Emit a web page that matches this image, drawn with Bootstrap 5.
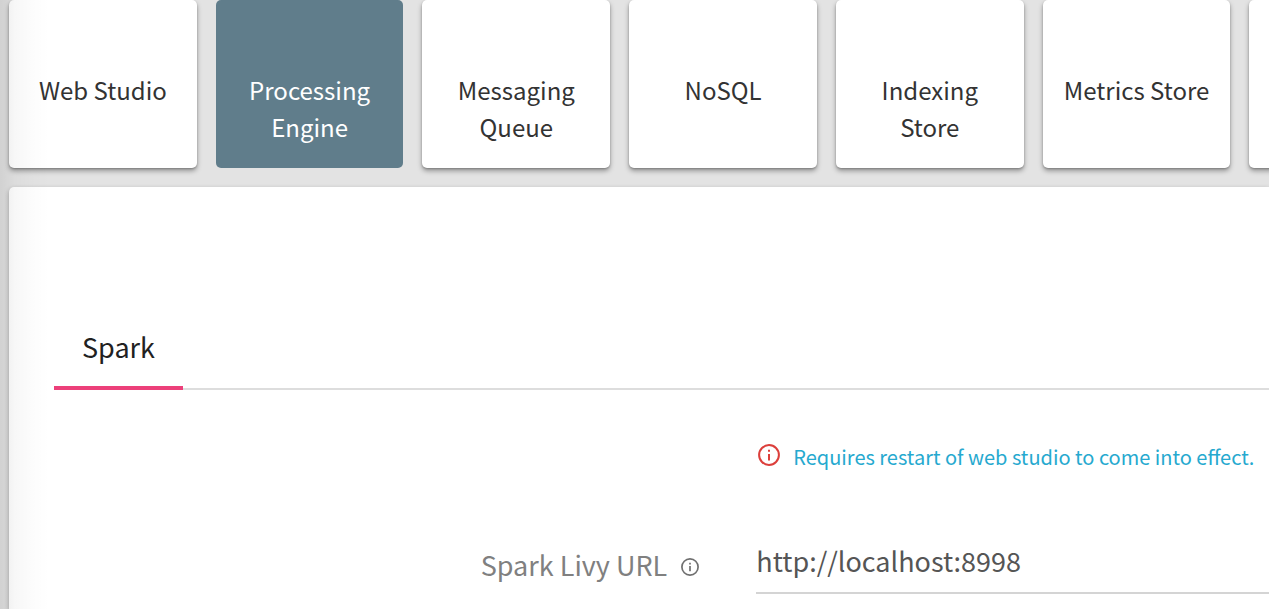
<!DOCTYPE html>
<html lang="en">
<head>
<meta charset="utf-8">
<meta name="viewport" content="width=device-width, initial-scale=1">
<title>Processing Engine - Spark</title>
<link href="https://cdn.jsdelivr.net/npm/bootstrap@5.3.0/dist/css/bootstrap.min.css" rel="stylesheet">
<style>
  body { font-family: "Noto Sans CJK SC", sans-serif; background: #e3e3e3; color: #333; overflow-x: hidden; }
  /* soft shade along the left edge of the page */
  .shell::before { content: ""; position: absolute; inset: 0 auto 0 0; width: 50px; z-index: 5; pointer-events: none;
    background: linear-gradient(to right, rgba(0,0,0,.08), rgba(0,0,0,.03) 30%, rgba(0,0,0,.01) 65%, transparent); }
  .shell { padding-left: 9px; overflow: hidden; }
  .tiles { gap: 19px; }
  .tile { flex: 0 0 14.9%; min-height: 168px; padding: 71px 16px 22px; border: 0; border-radius: 5px; background: #fff; color: #333;
    font-size: 24px; line-height: 37px; box-shadow: 0 3px 5px rgba(0,0,0,.35), 0 1px 2px rgba(0,0,0,.2); }
  .tile.active { background: #607d8b; color: #fff; box-shadow: none; }
  .panel { margin-top: 19px; padding: 128px 0 0 45px; background: #fff; border-radius: 5px 0 0 0; box-shadow: 0 2px 5px rgba(0,0,0,.3); }
  .tabs { border-bottom: 2px solid #ddd; }
  .tab { margin-bottom: -2px; padding: 10px 28px 18px; border: 0; border-bottom: 4px solid #ec407a; background: none;
    color: #212121; font-size: 27px; line-height: 43px; }
  .form-line { --bs-gutter-x: 0; }
  .note-line { margin-top: 51px; }
  .url-line { margin-top: 68px; }
  .col-name { width: 57.8%; padding: 4px 57px 0 0; gap: 14px; color: #808080; font-size: 27px; line-height: 40px; }
  .note { gap: 13px; padding-left: 2px; color: #26a9cf; font-size: 20px; line-height: 32px; }
  .url { border: 0; border-bottom: 2px solid #d4d4d4; border-radius: 0; padding: 0 0 11px; color: #555; font-size: 27px; line-height: 40px; }
</style>
</head>
<body>
<div class="shell position-relative min-vh-100 d-flex flex-column">
  <nav class="tiles d-flex" aria-label="Components">
    <button type="button" class="tile d-flex justify-content-center text-center">Web Studio</button>
    <button type="button" class="tile active d-flex justify-content-center text-center">Processing Engine</button>
    <button type="button" class="tile d-flex justify-content-center text-center">Messaging Queue</button>
    <button type="button" class="tile d-flex justify-content-center text-center">NoSQL</button>
    <button type="button" class="tile d-flex justify-content-center text-center">Indexing Store</button>
    <button type="button" class="tile d-flex justify-content-center text-center text-nowrap">Metrics Store</button>
    <div class="tile"></div>
  </nav>
  <main class="panel flex-grow-1">
    <div class="tabs d-flex" role="tablist">
      <button type="button" class="tab" role="tab" aria-selected="true">Spark</button>
    </div>
    <form>
      <div class="form-line note-line row">
        <div class="col-name"></div>
        <div class="note col d-flex align-items-center text-nowrap">
          <svg class="flex-shrink-0 mb-1" width="22" height="22" viewBox="0 0 22 22" fill="none" stroke="#dc3f3b" stroke-width="2" aria-hidden="true"><circle cx="11" cy="11" r="9.9"/><path d="M11 10v6.5M11 5.7v2"/></svg>
          <span>Requires restart of web studio to come into effect.</span>
        </div>
      </div>
      <div class="form-line url-line row align-items-start">
        <label class="col-name d-flex align-items-center justify-content-end" for="livy">Spark Livy URL
          <svg class="mt-1" width="18" height="18" viewBox="0 0 18 18" fill="none" stroke="#707070" stroke-width="1.7" aria-hidden="true"><circle cx="9" cy="9" r="8.1"/><path d="M9 8v5.3M9 4.7v1.7"/></svg>
        </label>
        <div class="col p-0"><input id="livy" class="url w-100 d-block" type="text" value="http://localhost:8998"></div>
      </div>
    </form>
  </main>
</div>
<script src="https://cdn.jsdelivr.net/npm/bootstrap@5.3.0/dist/js/bootstrap.bundle.min.js"></script>
</body>
</html>
